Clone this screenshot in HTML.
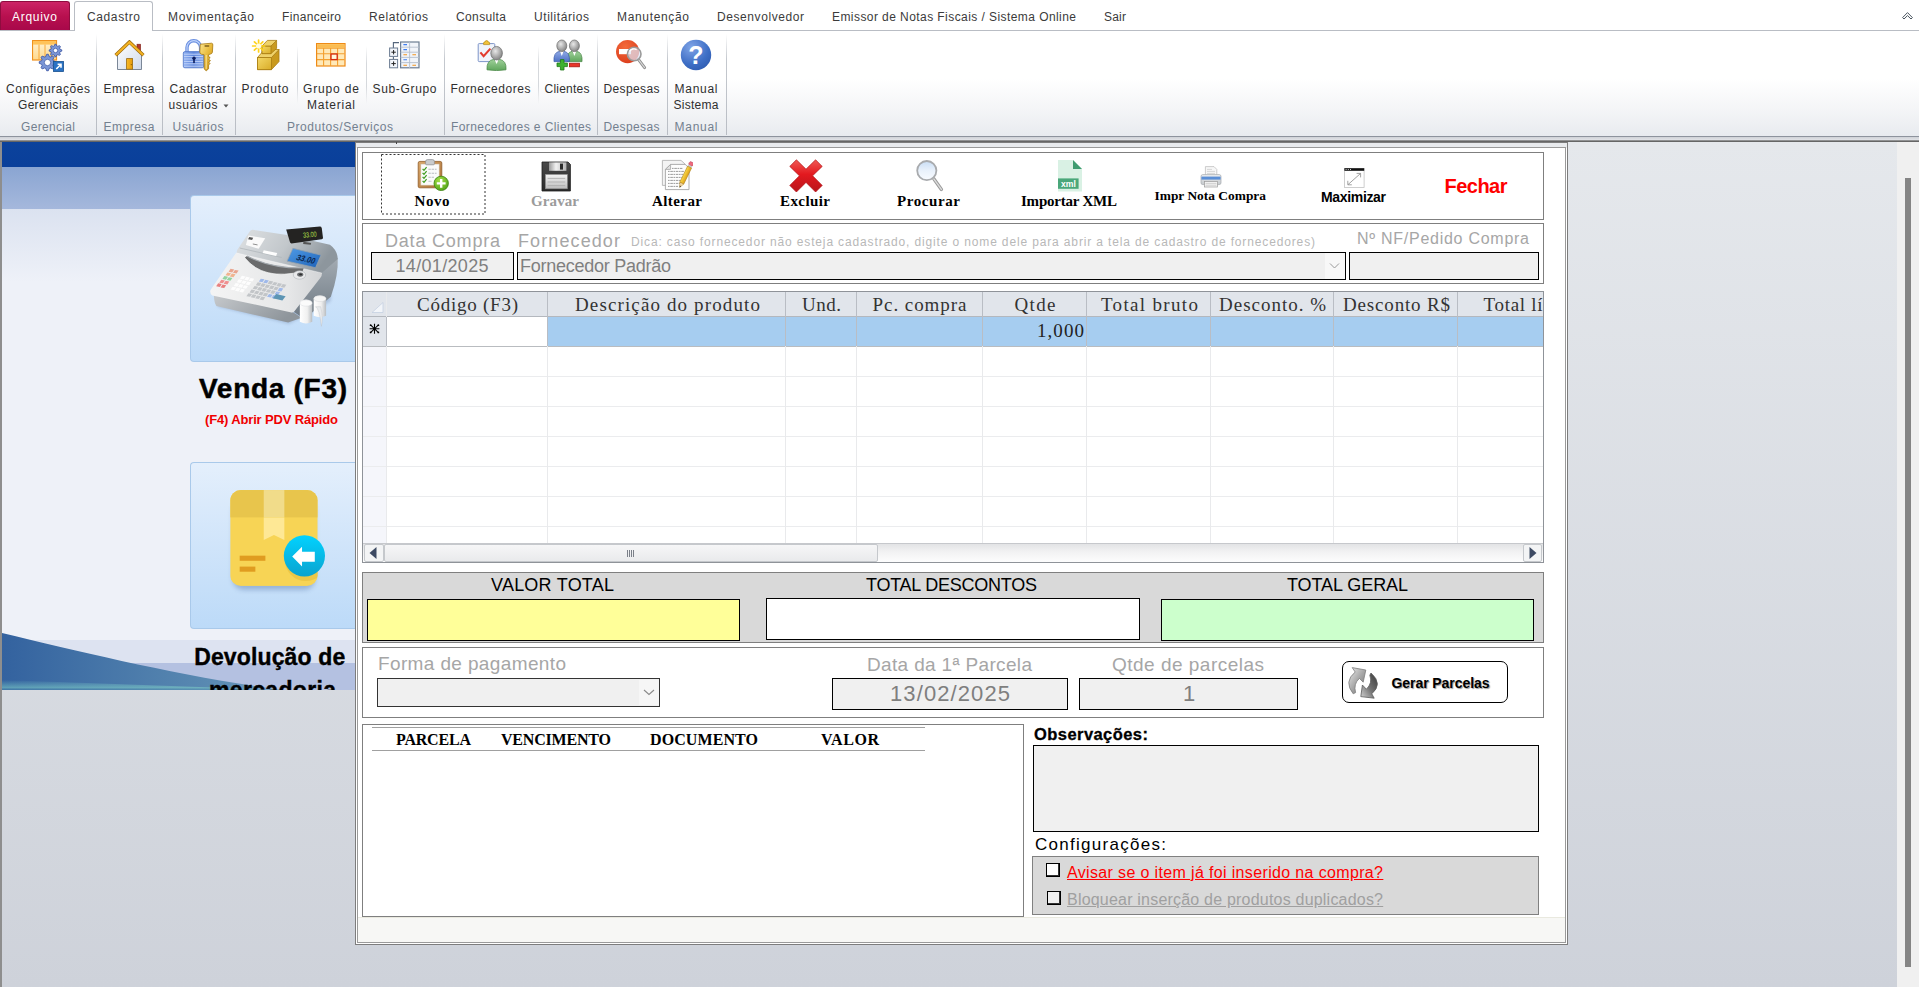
<!DOCTYPE html>
<html lang="pt-BR"><head><meta charset="utf-8"><title>Compras</title>
<style>
html,body{margin:0;padding:0;}
body{width:1919px;height:987px;overflow:hidden;position:relative;background:#dfe2e7;font-family:'Liberation Sans', sans-serif;}
div,span,svg{position:absolute;box-sizing:border-box;}
span{white-space:pre;}

.bx{border:1px solid #7f7f7f;background:#fff;}
.in{border:1px solid #000;background:#f0f0f0;}
.vs{width:1px;background:linear-gradient(#fff0,#c9cdd3 30%,#c9cdd3);}

</style></head><body>
<div style="left:0px;top:141px;width:1919px;height:846px;background:linear-gradient(#e5e8ec,#ced2da);"></div>
<div style="left:1897px;top:141px;width:22px;height:846px;background:#f0f0f0;"></div>
<div style="left:1905px;top:178px;width:6px;height:789px;background:#858585;"></div>
<div style="left:0px;top:141px;width:2px;height:846px;background:#8e8e8e;"></div>
<div style="left:0px;top:0px;width:1919px;height:31px;background:#fff;border-bottom:1px solid #b9bdc4;"></div>
<div style="left:0px;top:31px;width:1919px;height:105px;background:linear-gradient(#fff 0%,#fff 45%,#f4f5f7 75%,#e8ebef 100%);"></div>
<div style="left:0px;top:136px;width:1919px;height:1px;background:#8d939d;"></div>
<div style="left:0px;top:137px;width:1919px;height:3px;background:linear-gradient(#cfd2d7,#e1e3e7);"></div>
<div style="left:0px;top:140px;width:1919px;height:2px;background:linear-gradient(#a8a9ab,#666 70%);"></div>
<div style="left:0px;top:1px;width:70px;height:29px;background:linear-gradient(#cc2466,#b8104f 50%,#a8084a);border:1px solid #8f0c3f;border-bottom:none;border-radius:3px 3px 0 0;"></div>
<div style="left:74px;top:1px;width:79px;height:30px;background:#fff;border:1px solid #b9bdc4;border-bottom:none;border-radius:3px 3px 0 0;"></div>
<div style="left:1901px;top:10px;width:13px;height:11px;"><svg width="13" height="11" viewBox="0 0 13 11" style="left:0;top:0"><path d="M1.6 7.6 L6.5 2.6 L11.4 7.6 L10 9 L6.5 5.6 L3 9Z" fill="#fff" stroke="#4a5560" stroke-width="1" stroke-linejoin="round"/></svg></div>
<div style="left:96px;top:34px;width:1px;height:101px;background:linear-gradient(#fff0,#c4c8ce 25%,#b9bdc4);"></div>
<div style="left:162px;top:34px;width:1px;height:101px;background:linear-gradient(#fff0,#c4c8ce 25%,#b9bdc4);"></div>
<div style="left:235px;top:34px;width:1px;height:101px;background:linear-gradient(#fff0,#c4c8ce 25%,#b9bdc4);"></div>
<div style="left:444px;top:34px;width:1px;height:101px;background:linear-gradient(#fff0,#c4c8ce 25%,#b9bdc4);"></div>
<div style="left:597px;top:34px;width:1px;height:101px;background:linear-gradient(#fff0,#c4c8ce 25%,#b9bdc4);"></div>
<div style="left:667px;top:34px;width:1px;height:101px;background:linear-gradient(#fff0,#c4c8ce 25%,#b9bdc4);"></div>
<div style="left:726px;top:34px;width:1px;height:101px;background:linear-gradient(#fff0,#c4c8ce 25%,#b9bdc4);"></div>
<div style="left:297px;top:46px;width:1px;height:58px;background:linear-gradient(#fff0,#d5d8dc 30%,#d5d8dc 70%,#fff0);"></div>
<div style="left:366px;top:46px;width:1px;height:58px;background:linear-gradient(#fff0,#d5d8dc 30%,#d5d8dc 70%,#fff0);"></div>
<div style="left:538px;top:46px;width:1px;height:58px;background:linear-gradient(#fff0,#d5d8dc 30%,#d5d8dc 70%,#fff0);"></div>
<div style="left:2px;top:142px;width:353px;height:548px;background:linear-gradient(#0b429c 0px,#0a3f9a 25px,#8aa5d2 25px,#a5b8dc 67px,#dbe2f0 67px,#eef1f8 140px,#eef1f8 100%);overflow:hidden;">
<div style="left:0;top:498px;width:353px;height:50px;background:#dde3f1"></div>
<div style="left:0;top:521px;width:353px;height:27px;background:#b4c1e1"></div>
<svg width="353" height="58" viewBox="0 0 353 58" style="left:0;top:490px"><defs><linearGradient id="wv" x1="0" y1="0" x2="1" y2="0"><stop offset="0" stop-color="#33629f"/><stop offset="0.8" stop-color="#5d8db3"/><stop offset="1" stop-color="#86a6cb"/></linearGradient>
<linearGradient id="wv2" x1="0" y1="0" x2="0" y2="1"><stop offset="0" stop-color="#7fd0c8" stop-opacity="0"/><stop offset="0.75" stop-color="#7fd0c8" stop-opacity="0.55"/><stop offset="1" stop-color="#4f8fb0" stop-opacity="0.4"/></linearGradient></defs>
<path d="M0 1 C 80 20, 180 45, 282 58 L0 58 Z" fill="url(#wv)"/><path d="M0 48 L282 58 L0 58Z" fill="url(#wv2)"/></svg>
</div>
<div style="left:190px;top:195px;width:165px;height:167px;background:linear-gradient(#e4effc,#bcdaf8);border:1px solid #a9c9ea;border-right:none;border-radius:4px 0 0 4px;"></div>
<div style="left:190px;top:462px;width:165px;height:167px;background:linear-gradient(#e4effc,#bcdaf8);border:1px solid #a9c9ea;border-right:none;border-radius:4px 0 0 4px;"></div>
<div style="left:355px;top:142px;width:1213px;height:803px;background:#fff;border:1px solid #7d7d7d;"></div>
<div style="left:356px;top:143px;width:1211px;height:5px;background:#e9ebee;"></div>
<div style="left:357px;top:147px;width:1209px;height:796px;background:#fff;border:1px solid #9a9a9a;"></div>
<div style="left:358px;top:917px;width:1207px;height:25px;background:#f7f7f5;border-top:1px solid #e9e9df;"></div>
<div style="left:396px;top:142px;width:1px;height:2px;background:#444;"></div>
<div class="bx" style="left:362px;top:152px;width:1182px;height:68px;"></div>
<svg style="left:381px;top:154px" width="105" height="61"><rect x="0.5" y="0.5" width="103.5" height="59.5" fill="none" stroke="#333" stroke-width="1" stroke-dasharray="2 2"/></svg>
<div style="left:362px;top:223px;width:1182px;height:61px;border:1px solid #7f7f7f;"></div>
<div style="left:371px;top:252px;width:143px;height:28px;border:1px solid #000;background:#f0f0f0;"></div>
<div style="left:517px;top:252px;width:829px;height:28px;border:1px solid #000;background:#f0f0f0;"></div>
<div style="left:1349px;top:252px;width:190px;height:28px;border:1px solid #000;background:#f0f0f0;"></div>
<div style="left:1325px;top:253px;width:20px;height:26px;background:#f8f8f8;"><svg width="20" height="26" viewBox="0 0 20 26" style="left:0;top:0"><path d="M5 10.5 L9.5 15 L14 10.5" fill="none" stroke="#9a9a9a" stroke-width="1"/></svg></div>
<div style="left:362px;top:291px;width:1182px;height:272px;border:1px solid #8f9399;background:#fff;overflow:hidden;"></div>
<div style="left:363px;top:292px;width:1180px;height:25px;background:#e1e5eb;border-bottom:1px solid #b4b8be;"></div>
<div style="left:363px;top:317px;width:24px;height:226px;background:#f5f6fb;"></div>
<div style="left:363px;top:317px;width:24px;height:29px;background:#e1e5eb;"></div>
<div style="left:547px;top:317px;width:996px;height:29px;background:#a6cdf0;"></div>
<div style="left:363px;top:346px;width:1180px;height:1px;background:#b9bcc0;"></div>
<div style="left:363px;top:376px;width:1180px;height:1px;background:#ebecee;"></div>
<div style="left:363px;top:406px;width:1180px;height:1px;background:#ebecee;"></div>
<div style="left:363px;top:436px;width:1180px;height:1px;background:#ebecee;"></div>
<div style="left:363px;top:466px;width:1180px;height:1px;background:#ebecee;"></div>
<div style="left:363px;top:496px;width:1180px;height:1px;background:#ebecee;"></div>
<div style="left:363px;top:526px;width:1180px;height:1px;background:#ebecee;"></div>
<div style="left:386px;top:292px;width:1px;height:252px;background:#e9eaec;"></div>
<div style="left:547px;top:292px;width:1px;height:252px;background:#e9eaec;"></div>
<div style="left:785px;top:292px;width:1px;height:252px;background:#e9eaec;"></div>
<div style="left:856px;top:292px;width:1px;height:252px;background:#e9eaec;"></div>
<div style="left:982px;top:292px;width:1px;height:252px;background:#e9eaec;"></div>
<div style="left:1086px;top:292px;width:1px;height:252px;background:#e9eaec;"></div>
<div style="left:1210px;top:292px;width:1px;height:252px;background:#e9eaec;"></div>
<div style="left:1333px;top:292px;width:1px;height:252px;background:#e9eaec;"></div>
<div style="left:1457px;top:292px;width:1px;height:252px;background:#e9eaec;"></div>
<div style="left:547px;top:292px;width:1px;height:54px;background:#b9bdc4;"></div>
<div style="left:785px;top:292px;width:1px;height:54px;background:#b9bdc4;"></div>
<div style="left:856px;top:292px;width:1px;height:54px;background:#b9bdc4;"></div>
<div style="left:982px;top:292px;width:1px;height:54px;background:#b9bdc4;"></div>
<div style="left:1086px;top:292px;width:1px;height:54px;background:#b9bdc4;"></div>
<div style="left:1210px;top:292px;width:1px;height:54px;background:#b9bdc4;"></div>
<div style="left:1333px;top:292px;width:1px;height:54px;background:#b9bdc4;"></div>
<div style="left:1457px;top:292px;width:1px;height:54px;background:#b9bdc4;"></div>
<div style="left:386px;top:317px;width:1px;height:29px;background:#b9bdc4;"></div>
<div style="left:387px;top:317px;width:160px;height:29px;background:#fff;"></div>
<svg style="left:371px;top:301px" width="13" height="13" viewBox="0 0 13 13"><path d="M1 11.5 H12 V1.5Z" fill="#f2f5f9" stroke="#c2cde0" stroke-width="0.7"/></svg>
<svg style="left:368px;top:323px" width="13" height="12" viewBox="0 0 13 12"><path d="M6.5 0.8V10.8M1.6 5.8H11.4M2.8 2.2L10.2 9.4M10.2 2.2L2.8 9.4" stroke="#000" stroke-width="1.1"/><circle cx="2.6" cy="2.2" r="0.9"/><circle cx="10.4" cy="2.2" r="0.9"/><circle cx="2.6" cy="9.4" r="0.9"/><circle cx="10.4" cy="9.4" r="0.9"/></svg>
<div style="left:363px;top:543px;width:1180px;height:19px;background:linear-gradient(#e2e3e5,#f1f1f2 40%,#fdfdfd);border-top:1px solid #c6c8cc;"></div>
<div style="left:364px;top:544px;width:20px;height:18px;background:#f3f4f5;border:1px solid #c5c8cc;border-radius:2px;"><svg width="18" height="16" viewBox="0 0 18 16" style="left:0;top:0"><path d="M11.5 2 L11.5 14 L4.5 8Z" fill="#3d4a63"/></svg></div>
<div style="left:1523px;top:544px;width:19px;height:18px;background:#f3f4f5;border:1px solid #c5c8cc;border-radius:2px;"><svg width="17" height="16" viewBox="0 0 17 16" style="left:0;top:0"><path d="M5.5 2 L5.5 14 L12.5 8Z" fill="#3d4a63"/></svg></div>
<div style="left:384px;top:544px;width:494px;height:18px;background:linear-gradient(#f6f6f7,#e9eaec);border:1px solid #c5c8cc;border-radius:2px;"></div>
<div style="left:627px;top:550px;width:1px;height:7px;background:#7a7f88;"></div>
<div style="left:629px;top:550px;width:1px;height:7px;background:#7a7f88;"></div>
<div style="left:631px;top:550px;width:1px;height:7px;background:#7a7f88;"></div>
<div style="left:633px;top:550px;width:1px;height:7px;background:#7a7f88;"></div>
<div style="left:362px;top:572px;width:1182px;height:71px;background:#d9d9d9;border:1px solid #7f7f7f;"></div>
<div style="left:367px;top:599px;width:373px;height:42px;background:#ffff99;border:1px solid #000;"></div>
<div style="left:766px;top:598px;width:374px;height:42px;background:#fff;border:1px solid #000;"></div>
<div style="left:1161px;top:599px;width:373px;height:42px;background:#ccffcc;border:1px solid #000;"></div>
<div style="left:362px;top:647px;width:1182px;height:71px;border:1px solid #7f7f7f;"></div>
<div style="left:377px;top:678px;width:283px;height:29px;border:1px solid #333;background:#f0f0f0;"></div>
<div style="left:639px;top:680px;width:20px;height:25px;background:#f6f6f6;"><svg width="20" height="25" viewBox="0 0 20 25" style="left:0;top:0"><path d="M5 10 L10 14.5 L15 10" fill="none" stroke="#8a8a8a" stroke-width="1.1"/></svg></div>
<div style="left:832px;top:678px;width:236px;height:32px;border:1px solid #000;background:#f0f0f0;"></div>
<div style="left:1079px;top:678px;width:219px;height:32px;border:1px solid #000;background:#f0f0f0;"></div>
<div style="left:1342px;top:661px;width:166px;height:42px;border:1px solid #000;border-radius:7px;background:#fff;"></div>
<div style="left:362px;top:724px;width:662px;height:193px;border:1px solid #7f7f7f;"></div>
<div style="left:372px;top:727px;width:553px;height:1px;background:#a0a0a0;"></div>
<div style="left:372px;top:750px;width:553px;height:1px;background:#a0a0a0;"></div>
<div style="left:1033px;top:745px;width:506px;height:87px;border:1px solid #000;background:#f0f0f0;"></div>
<div style="left:1032px;top:856px;width:507px;height:59px;border:1px solid #808080;background:#d9d9d9;"></div>
<div style="left:1046px;top:863px;width:14px;height:14px;border:1px solid #000;background:#fff;box-shadow:inset -1px -1px 0 #333;"></div>
<div style="left:1047px;top:891px;width:14px;height:14px;border:1px solid #000;background:#f0f0f0;box-shadow:inset -1px -1px 0 #333;"></div>
<div style="left:223px;top:104px;width:6px;height:4px;"><svg width="6" height="4" viewBox="0 0 6 4" style="left:0;top:0"><path d="M0.5 0.5 L5.5 0.5 L3 3.5Z" fill="#555"/></svg></div>
<svg style="left:32px;top:40px" width="32" height="32" viewBox="0 0 32 32">
<defs><linearGradient id="og" x1="0" y1="0" x2="0" y2="1"><stop offset="0" stop-color="#fff3d6"/><stop offset="1" stop-color="#ffd98c"/></linearGradient></defs>
<rect x="0.5" y="0.5" width="24" height="19.5" fill="url(#og)" stroke="#f0921e" stroke-width="1.2"/>
<rect x="1" y="1" width="23" height="3.6" fill="#ffc35a"/>
<path d="M7 4.6V20M13 4.6V20M19 4.6V20" stroke="#f6a83a" stroke-width="1"/>
<polygon points="29.77,9.88 29.77,11.12 27.96,11.85 27.61,12.70 28.37,14.50 27.50,15.37 25.70,14.61 24.85,14.96 24.12,16.77 22.88,16.77 22.15,14.96 21.30,14.61 19.50,15.37 18.63,14.50 19.39,12.70 19.04,11.85 17.23,11.12 17.23,9.88 19.04,9.15 19.39,8.30 18.63,6.50 19.50,5.63 21.30,6.39 22.15,6.04 22.88,4.23 24.12,4.23 24.85,6.04 25.70,6.39 27.50,5.63 28.37,6.50 27.61,8.30 27.96,9.15" fill="#7b96d6" stroke="#3f5aa8" stroke-width="0.9" stroke-linejoin="round"/><circle cx="23.5" cy="10.5" r="2.2" fill="#fff" stroke="#3f5aa8" stroke-width="0.8"/><polygon points="23.76,21.69 23.76,23.31 21.38,24.28 20.92,25.40 21.92,27.77 20.77,28.92 18.40,27.92 17.28,28.38 16.31,30.76 14.69,30.76 13.72,28.38 12.60,27.92 10.23,28.92 9.08,27.77 10.08,25.40 9.62,24.28 7.24,23.31 7.24,21.69 9.62,20.72 10.08,19.60 9.08,17.23 10.23,16.08 12.60,17.08 13.72,16.62 14.69,14.24 16.31,14.24 17.28,16.62 18.40,17.08 20.77,16.08 21.92,17.23 20.92,19.60 21.38,20.72" fill="#7b96d6" stroke="#3f5aa8" stroke-width="0.9" stroke-linejoin="round"/><circle cx="15.5" cy="22.5" r="3.2" fill="#fff" stroke="#3f5aa8" stroke-width="0.8"/>
<rect x="21.5" y="21.5" width="10" height="10" fill="#2a72c4" stroke="#17508f" stroke-width="0.8"/>
<path d="M24.3 29 L28.6 24.7 M25.6 24.3 H29 V27.7" stroke="#fff" stroke-width="1.6" fill="none"/>
</svg>
<svg style="left:113px;top:40px" width="32" height="32" viewBox="0 0 32 32">
<defs><linearGradient id="hw" x1="0" y1="0" x2="1" y2="1"><stop offset="0" stop-color="#ffffff"/><stop offset="1" stop-color="#cfd9ea"/></linearGradient>
<linearGradient id="hd" x1="0" y1="0" x2="1" y2="0"><stop offset="0" stop-color="#f7b928"/><stop offset="1" stop-color="#e59a0a"/></linearGradient></defs>
<rect x="24" y="4.2" width="3.6" height="9" fill="#b3372c" stroke="#7d211a" stroke-width="0.6"/>
<path d="M4.5 14 L16.4 3.2 L28.5 14 V29.5 H4.5Z" fill="url(#hw)" stroke="#7b8797" stroke-width="1"/>
<path d="M2.6 15.2 L16.4 2 L30.4 15.2" fill="none" stroke="#9a6a10" stroke-width="3.4" stroke-linejoin="miter"/>
<path d="M2.8 15 L16.4 2.2 L30.2 15" fill="none" stroke="#f3b221" stroke-width="2" stroke-linejoin="miter"/>
<rect x="13.6" y="18.6" width="6" height="10.6" fill="url(#hd)" stroke="#9a6a10" stroke-width="0.8"/>
<circle cx="18.3" cy="24.6" r="0.6" fill="#7a5208"/>
</svg>
<svg style="left:182px;top:39px" width="32" height="33" viewBox="0 0 32 33">
<defs><linearGradient id="lk" x1="0" y1="0" x2="1" y2="0"><stop offset="0" stop-color="#8fb0f0"/><stop offset="0.5" stop-color="#5f86dc"/><stop offset="1" stop-color="#86a6ea"/></linearGradient>
<linearGradient id="ky" x1="0" y1="0" x2="1" y2="1"><stop offset="0" stop-color="#fbe58e"/><stop offset="0.5" stop-color="#e8b93a"/><stop offset="1" stop-color="#c58d14"/></linearGradient></defs>
<path d="M5 13 V8.5 A6.8 6.8 0 0 1 18.6 8.5 V13" fill="none" stroke="#6a8fe0" stroke-width="3.4"/>
<path d="M5 13 V8.5 A6.8 6.8 0 0 1 18.6 8.5 V13" fill="none" stroke="#c0d4fb" stroke-width="1.2"/>
<rect x="1.3" y="12.6" width="20.5" height="16.2" rx="1.6" fill="url(#lk)" stroke="#5276c8" stroke-width="0.8"/>
<path d="M2 15.2H21M2 17.6H21M2 20H21M2 22.4H21M2 24.8H21M2 27.2H21" stroke="#c7d8fb" stroke-width="0.9"/>
<circle cx="12" cy="19.3" r="1.7" fill="#0c1d5e"/><rect x="11.2" y="19.3" width="1.6" height="4.8" fill="#0c1d5e"/>
<path d="M18.3 5.2 L29.6 4.2 Q31 4.4 30.8 6 L30.4 13.2 Q30 14.8 28.6 15 L26.6 15.6 V17.6 L28.2 18.6 L26.6 20 L28.4 21.8 L26.6 23 L28 24.6 L26.6 26 V29.8 L24.2 31.8 L22.2 30 V15.8 L19.4 15.2 Q17.8 14.6 17.8 13Z" fill="url(#ky)" stroke="#a87810" stroke-width="0.8" stroke-linejoin="round"/>
<rect x="22.6" y="6" width="4.6" height="2" rx="0.6" fill="#9b7a2a"/>
<path d="M24.2 16 V30" stroke="#fff2b8" stroke-width="0.8"/>
</svg>
<svg style="left:251px;top:39px" width="30" height="32" viewBox="0 0 30 32">
<defs><linearGradient id="bx1" x1="0" y1="0" x2="1" y2="1"><stop offset="0" stop-color="#f4d867"/><stop offset="1" stop-color="#d9ac28"/></linearGradient></defs>
<path d="M6.5 18.5 H20.5 L28 10.5 V22.6 L20.5 30.6 H6.5Z" fill="#c99a1e" stroke="#a87c10" stroke-width="0.8" stroke-linejoin="round"/>
<path d="M6.5 18.5 H20.5 V30.6 H6.5Z" fill="url(#bx1)" stroke="#a87c10" stroke-width="0.8"/>
<path d="M6.5 18.5 L13.6 10.5 H28 L20.5 18.5Z" fill="#efd26a" stroke="#a87c10" stroke-width="0.8" stroke-linejoin="round"/>
<path d="M11 7 H20 L25.6 1.4 V9.4 L20 14.6 H11Z" fill="#c99a1e" stroke="#a87c10" stroke-width="0.8" stroke-linejoin="round"/>
<path d="M11 7 H20 V14.6 H11Z" fill="url(#bx1)" stroke="#a87c10" stroke-width="0.8"/>
<path d="M11 7 L16.4 1.4 H25.6 L20 7Z" fill="#efd26a" stroke="#a87c10" stroke-width="0.8" stroke-linejoin="round"/>
<g stroke="#ffd21a" stroke-width="1.7" stroke-linecap="round"><path d="M7.6 1 V13 M1.6 7 H13.6 M3.4 2.8 L11.8 11.2 M11.8 2.8 L3.4 11.2"/></g>
<circle cx="7.6" cy="7" r="2.6" fill="#fffbe0"/>
</svg>
<svg style="left:316px;top:43px" width="30" height="24" viewBox="0 0 30 24">
<rect x="0.6" y="0.6" width="28.4" height="22.4" fill="#ffe9b8" stroke="#ee8b16" stroke-width="1.2"/>
<rect x="1.2" y="1.2" width="27.2" height="3.6" fill="#fbbd52"/>
<path d="M1 5.2H28.6M1 10.8H28.6M1 16.6H28.6M7.6 5V23M14.6 5V23M21.6 5V23" stroke="#f3a030" stroke-width="1.1"/>
<rect x="15" y="11" width="6.2" height="5.6" fill="#fff6dc" stroke="#d5280c" stroke-width="1.3"/>
</svg>
<svg style="left:389px;top:41px" width="31" height="28" viewBox="0 0 31 28">
<path d="M4.4 7 V1.6 H10" fill="none" stroke="#55667c" stroke-width="1.1"/>
<path d="M4.4 15.5 V18.5" stroke="#55667c" stroke-width="1.1"/>
<rect x="0.6" y="7" width="8" height="8.4" fill="#f3f6fb" stroke="#6c7c92" stroke-width="1"/>
<rect x="0.6" y="18.4" width="8" height="8.4" fill="#f3f6fb" stroke="#6c7c92" stroke-width="1"/>
<path d="M2.4 11.2H6.8M4.6 9V13.4M2.4 22.6H6.8M4.6 20.4V24.8" stroke="#222" stroke-width="1"/>
<rect x="11.6" y="1" width="18.4" height="25.8" fill="#f1f4fa" stroke="#6c7c92" stroke-width="1.2"/>
<path d="M11.6 6.2H30M11.6 11.2H30M11.6 16.4H30M11.6 21.6H30M20.6 1V27" stroke="#b4bfce" stroke-width="0.9"/>
<path d="M14.4 3.6H18M14.4 8.6H18M14.4 18.8H18" stroke="#3f7df0" stroke-width="1.1"/>
<path d="M14.4 13.8H18M23.4 13.8H27M14.4 24.2H18M23.4 24.2H27" stroke="#f2921e" stroke-width="1.1"/>
</svg>
<svg style="left:477px;top:40px" width="30" height="31" viewBox="0 0 30 31">
<defs><radialGradient id="hd1" cx="0.4" cy="0.35" r="0.7"><stop offset="0" stop-color="#e8e8e8"/><stop offset="1" stop-color="#7e7e7e"/></radialGradient>
<linearGradient id="gb" x1="0" y1="0" x2="0" y2="1"><stop offset="0" stop-color="#9fd09a"/><stop offset="1" stop-color="#5fa65c"/></linearGradient></defs>
<rect x="1.2" y="3.6" width="16.6" height="18" rx="1" fill="#f0f4fb" stroke="#7d94c8" stroke-width="1"/>
<path d="M6.6 4.6 V3 Q6.6 2 7.8 2 H8 Q8.2 0.6 9.6 0.6 Q11 0.6 11.2 2 H11.4 Q12.6 2 12.6 3 V4.6Z" fill="#f2c23a" stroke="#b58a14" stroke-width="0.7"/>
<path d="M3.4 12.4 L6.6 16.2 L13.4 8.6" fill="none" stroke="#e23b2e" stroke-width="2.1"/>
<path d="M10 29.8 Q9.4 20.4 16.6 19.4 L19.6 22 L22.6 19.4 Q29.6 20.4 29 29.8 Q19.6 31.4 10 29.8Z" fill="url(#gb)" stroke="#4c8a4a" stroke-width="0.8"/>
<path d="M17.4 19.4 L19.6 24 L21.8 19.4Z" fill="#fff"/>
<ellipse cx="19.6" cy="13.2" rx="5.8" ry="6.8" fill="url(#hd1)" stroke="#6a6a6a" stroke-width="0.7"/>
</svg>
<svg style="left:553px;top:39px" width="30" height="32" viewBox="0 0 30 32">
<defs><linearGradient id="bb" x1="0" y1="0" x2="0" y2="1"><stop offset="0" stop-color="#8fa9e6"/><stop offset="1" stop-color="#4f72c6"/></linearGradient></defs>
<path d="M14 22.6 Q13.4 13.2 19 12.4 L21.4 15 L23.8 12.4 Q29.6 13.2 29 22.6Z" fill="url(#gb)" stroke="#4c8a4a" stroke-width="0.8"/>
<path d="M19.6 12.4 L21.4 17 L23.2 12.4Z" fill="#fff"/>
<ellipse cx="21.4" cy="6.8" rx="5" ry="5.8" fill="url(#hd1)" stroke="#6a6a6a" stroke-width="0.7"/>
<path d="M1 22.6 Q0.4 13.2 6.4 12.4 L8.8 15 L11.2 12.4 Q17 13.2 16.4 22.6Z" fill="url(#bb)" stroke="#3f5fae" stroke-width="0.8"/>
<path d="M7 12.4 L8.8 17 L10.6 12.4Z" fill="#fff"/>
<ellipse cx="8.8" cy="6.8" rx="5" ry="5.8" fill="url(#hd1)" stroke="#6a6a6a" stroke-width="0.7"/>
<path d="M7.4 20.6 H11 V24 H14.4 V27.6 H11 V31 H7.4 V27.6 H4 V24 H7.4Z" fill="#3eb12f" stroke="#1f7a16" stroke-width="0.8"/>
<rect x="16.4" y="24.2" width="10" height="3.6" fill="#e8362a" stroke="#a81a12" stroke-width="0.8"/>
</svg>
<svg style="left:615px;top:39px" width="32" height="32" viewBox="0 0 32 32">
<defs><radialGradient id="rc" cx="0.4" cy="0.3" r="0.8"><stop offset="0" stop-color="#f46a3a"/><stop offset="1" stop-color="#d93a1a"/></radialGradient></defs>
<circle cx="12.6" cy="12.6" r="11.6" fill="url(#rc)"/>
<rect x="4" y="10" width="12" height="5.2" fill="#fff"/>
<path d="M23.4 20.4 L29.6 28.6" stroke="#8a8a8a" stroke-width="3" stroke-linecap="round"/>
<path d="M23.4 20.4 L29.6 28.6" stroke="#d8d8d8" stroke-width="1.2" stroke-linecap="round"/>
<circle cx="19.2" cy="15" r="6.8" fill="#dfe6f6" fill-opacity="0.72" stroke="#9a9a9a" stroke-width="1.6"/>
<path d="M14.6 12.4 A5 5 0 0 1 21.6 10.6" stroke="#fff" stroke-width="1.4" fill="none"/>
</svg>
<svg style="left:680px;top:39px" width="32" height="32" viewBox="0 0 32 32">
<defs><radialGradient id="qb" cx="0.35" cy="0.25" r="0.9"><stop offset="0" stop-color="#7fa4e6"/><stop offset="0.6" stop-color="#3f6fc6"/><stop offset="1" stop-color="#2b57ac"/></radialGradient></defs>
<circle cx="16" cy="16" r="15.2" fill="url(#qb)"/>
<text x="16" y="24.6" text-anchor="middle" font-family="'Liberation Sans',sans-serif" font-weight="bold" font-size="25" fill="#fff">?</text>
</svg>
<svg style="left:417px;top:159px" width="32" height="32" viewBox="0 0 32 32">
<defs><linearGradient id="cb" x1="0" y1="0" x2="1" y2="1"><stop offset="0" stop-color="#d9a76a"/><stop offset="1" stop-color="#a96e34"/></linearGradient>
<radialGradient id="gp" cx="0.4" cy="0.3" r="0.8"><stop offset="0" stop-color="#a6e04a"/><stop offset="1" stop-color="#4a9e12"/></radialGradient></defs>
<rect x="1.2" y="2.4" width="23.6" height="26.4" rx="1.6" fill="url(#cb)" stroke="#8e5a26" stroke-width="0.8"/>
<rect x="3.8" y="5" width="18.4" height="21.2" fill="#fbfbfb" stroke="#c9b394" stroke-width="0.6"/>
<path d="M8.6 4.8 V2.4 Q8.6 0.6 10.6 0.6 H15.4 Q17.4 0.6 17.4 2.4 V4.8 Q17.4 5.8 16.4 5.8 H9.6 Q8.6 5.8 8.6 4.8Z" fill="#c9cbcd" stroke="#8a8d90" stroke-width="0.7"/>
<g fill="none" stroke="#3c9a1c" stroke-width="1.2"><path d="M5.6 9.8 L7 11.4 L9.6 8.2"/><path d="M5.6 13.8 L7 15.4 L9.6 12.2"/><path d="M5.6 17.8 L7 19.4 L9.6 16.2"/><path d="M5.6 21.8 L7 23.4 L9.6 20.2"/></g>
<path d="M11.4 10.2H19.6M11.4 14.2H19.6M11.4 18.2H17M11.4 22.2H15" stroke="#b9bcc0" stroke-width="1.1" stroke-dasharray="2.4 0.8"/>
<circle cx="24.2" cy="24.4" r="7.2" fill="url(#gp)" stroke="#3b8410" stroke-width="0.8"/>
<path d="M24.2 20 V28.8 M19.8 24.4 H28.6" stroke="#fff" stroke-width="2.4"/>
</svg>
<svg style="left:541px;top:161px" width="30" height="31" viewBox="0 0 30 31">
<defs><linearGradient id="fl" x1="0" y1="0" x2="0" y2="1"><stop offset="0" stop-color="#4a4a4a"/><stop offset="1" stop-color="#2a2a2a"/></linearGradient>
<linearGradient id="fm" x1="0" y1="0" x2="1" y2="0"><stop offset="0" stop-color="#9a9a9a"/><stop offset="0.4" stop-color="#f2f2f2"/><stop offset="1" stop-color="#b4b4b4"/></linearGradient>
<linearGradient id="fb" x1="0" y1="0" x2="0" y2="1"><stop offset="0" stop-color="#f4f4f4"/><stop offset="1" stop-color="#bdbdbd"/></linearGradient></defs>
<path d="M1 1 H27 L29.4 3.4 V30 H1Z" fill="url(#fl)" stroke="#1e1e1e" stroke-width="0.8"/>
<rect x="8" y="1.4" width="17.4" height="8.4" fill="url(#fm)"/>
<rect x="19" y="2.6" width="3" height="6" fill="#2c2c2c"/>
<rect x="4.4" y="13.4" width="22" height="14.4" fill="url(#fb)" stroke="#8a8a8a" stroke-width="0.6"/>
<path d="M6.6 17.4H24.2M6.6 21H24.2M6.6 24.6H24.2" stroke="#a9a9a9" stroke-width="0.8"/>
</svg>
<svg style="left:661px;top:159px" width="32" height="32" viewBox="0 0 32 32">
<defs><linearGradient id="pn" x1="0" y1="0" x2="1" y2="0"><stop offset="0" stop-color="#f9d94a"/><stop offset="1" stop-color="#e0a31a"/></linearGradient></defs>
<path d="M1.4 1.4 H20 L24 5 V26.4 H1.4Z" fill="#f4f4f4" stroke="#b4b4b4" stroke-width="0.9"/>
<path d="M9.6 5.4 H24.2 L28 9 V30.6 H4.4 V10.4Z" fill="#fdfdfd" stroke="#a4a4a4" stroke-width="0.9"/>
<path d="M4.4 10.4 H9.6 V5.4Z" fill="#e4e4e4" stroke="#a4a4a4" stroke-width="0.8"/>
<path d="M11 9.4H22M7 12.4H23M7 15.4H22M7 18.4H23M7 21.4H21M7 24.4H20M7 27.4H17" stroke="#8e8e8e" stroke-width="0.9" stroke-dasharray="1.6 0.7 2.6 0.6"/>
<g transform="translate(29.8,5.6) rotate(26)"><rect x="-2.2" y="-2.6" width="4.4" height="3.6" rx="1.2" fill="#ee6a7e" stroke="#b43c50" stroke-width="0.5"/><rect x="-2.2" y="1" width="4.4" height="1.8" fill="#c9c9c9"/><rect x="-2.2" y="2.8" width="4.4" height="17.8" fill="url(#pn)" stroke="#a8780c" stroke-width="0.5"/><path d="M-2.2 20.6 L0 25.4 L2.2 20.6Z" fill="#f3d7a6" stroke="#a8780c" stroke-width="0.4"/><path d="M-0.8 23.6 L0 25.4 L0.8 23.6Z" fill="#333"/></g>
</svg>
<svg style="left:789px;top:159px" width="34" height="34" viewBox="0 0 34 34">
<defs><linearGradient id="rx" x1="0" y1="0" x2="0" y2="1"><stop offset="0" stop-color="#f05a55"/><stop offset="0.45" stop-color="#e3191f"/><stop offset="1" stop-color="#b8141a"/></linearGradient></defs>
<path d="M7.4 0.8 L17 10.2 L26.6 0.8 L33.2 7.4 L23.6 16.8 L33.2 26.4 L26.6 33 L17 23.4 L7.4 33 L0.8 26.4 L10.4 16.8 L0.8 7.4Z" fill="url(#rx)" stroke="#b01218" stroke-width="0.7" stroke-linejoin="round"/>
</svg>
<svg style="left:914px;top:159px" width="30" height="34" viewBox="0 0 30 34">
<defs><linearGradient id="ln" x1="0" y1="0" x2="0" y2="1"><stop offset="0" stop-color="#c9def6"/><stop offset="0.5" stop-color="#e9f1fb"/><stop offset="1" stop-color="#f8fbff"/></linearGradient></defs>
<path d="M19.8 19.8 L27.4 30.4" stroke="#9a9a9a" stroke-width="3.4" stroke-linecap="round"/>
<path d="M19.8 19.8 L27.4 30.4" stroke="#dcdcdc" stroke-width="1.4" stroke-linecap="round"/>
<circle cx="12.8" cy="11.6" r="9.6" fill="url(#ln)" stroke="#a9abae" stroke-width="1.8"/>
</svg>
<svg style="left:1057px;top:159px" width="26" height="33" viewBox="0 0 26 33">
<path d="M1 1 H16 L25 10 V32.4 H1Z" fill="#d9f1e4"/>
<path d="M16 1 L25 10 H16Z" fill="#3f9c70"/>
<rect x="1" y="19.4" width="20.6" height="10.4" fill="#4aa77a"/>
<text x="11.4" y="27.6" text-anchor="middle" font-family="'Liberation Sans',sans-serif" font-weight="bold" font-size="8.6" fill="#fff">xml</text>
</svg>
<svg style="left:1200px;top:166px" width="22" height="22" viewBox="0 0 22 22">
<defs><linearGradient id="pr" x1="0" y1="0" x2="0" y2="1"><stop offset="0" stop-color="#eef0f2"/><stop offset="1" stop-color="#c4c8cc"/></linearGradient></defs>
<path d="M5.4 0.6 H14 L16.8 3.4 V10 H5.4Z" fill="#f7f7f7" stroke="#b9b9b9" stroke-width="0.7"/>
<path d="M7 3.4H12M7 5.4H15M7 7.4H15" stroke="#c9c9c9" stroke-width="0.7"/>
<rect x="1" y="8.6" width="20" height="10" rx="1.8" fill="url(#pr)" stroke="#a4a8ac" stroke-width="0.7"/>
<rect x="1.4" y="10.6" width="19.2" height="3" fill="#5b8fd6"/>
<rect x="4.4" y="15.4" width="13.2" height="5.6" fill="#f4f4f4" stroke="#9a9a9a" stroke-width="0.7"/>
<path d="M5.6 17.4H16.4M5.6 19.2H16.4" stroke="#b9b9b9" stroke-width="0.6"/>
</svg>
<svg style="left:1344px;top:168px" width="21" height="20" viewBox="0 0 21 20">
<rect x="0.5" y="0.5" width="19.6" height="19" fill="#fff" stroke="#c2c2c2" stroke-width="0.8"/>
<rect x="0.4" y="0.2" width="19.8" height="2.6" fill="#111"/>
<path d="M1.6 1.5H2.6M3.8 1.5H4.8M6 1.5H7" stroke="#ddd" stroke-width="0.9"/>
<path d="M4 16.6 L16.4 5.6 M12.6 5.4 H16.6 V9.4 M3.8 12.8 V16.8 H7.8" stroke="#8a8a8a" stroke-width="0.8" fill="none"/>
</svg>
<svg style="left:1347px;top:667px" width="33" height="32" viewBox="0 0 33 32">
<defs><linearGradient id="ga" x1="0" y1="0" x2="1" y2="1"><stop offset="0" stop-color="#ececec"/><stop offset="0.5" stop-color="#a8a8a8"/><stop offset="1" stop-color="#6e6e6e"/></linearGradient>
<linearGradient id="gd" x1="1" y1="0" x2="0" y2="1"><stop offset="0" stop-color="#383838"/><stop offset="0.55" stop-color="#767676"/><stop offset="1" stop-color="#d4d4d4"/></linearGradient></defs>
<path d="M5.2 0.6 L18.8 3 L16.2 15.2 L12.4 11.4 Q6.2 16.8 8.6 25.6 L6.2 26.8 Q-3.6 14.6 8.2 5Z" fill="url(#ga)" stroke="#7d7d7d" stroke-width="0.8" stroke-linejoin="round"/>
<path d="M24 6 Q36.4 17 24.8 26.8 L27.2 31.2 L13.8 29.6 L15.4 18 L19.4 22.2 Q25.8 16 22.8 8.2Z" fill="url(#gd)" stroke="#5c5c5c" stroke-width="0.8" stroke-linejoin="round"/>
</svg>
<svg style="left:185px;top:455px" width="175" height="180" viewBox="0 0 960 987">
<defs><linearGradient id="cy" x1="0" y1="0" x2="0" y2="1"><stop offset="0" stop-color="#02d2ff"/><stop offset="1" stop-color="#0aa3cf"/></linearGradient>
<filter id="sh" x="-20%" y="-20%" width="140%" height="150%"><feGaussianBlur stdDeviation="14"/></filter>
<clipPath id="pk"><rect x="248" y="192" width="480" height="526" rx="58"/></clipPath></defs>
<rect x="262" y="250" width="452" height="490" rx="58" fill="#5f7fae" opacity="0.45" filter="url(#sh)"/>
<g clip-path="url(#pk)">
<rect x="248" y="192" width="480" height="526" fill="#f7d455"/>
<rect x="248" y="192" width="480" height="150" fill="#e8c54c"/>
<rect x="432" y="192" width="113" height="150" fill="#f1dc8a"/>
<path d="M432 342 H545 V466 L488 438 L432 466Z" fill="#fee895"/>
<rect x="300" y="552" width="141" height="28" fill="#e09c20"/>
<rect x="300" y="612" width="86" height="28" fill="#e09c20"/>
<circle cx="662" cy="578" r="113" fill="#e3bb3a" opacity="0.55"/>
</g>
<circle cx="655" cy="553" r="113" fill="url(#cy)"/>
<path d="M588 556 L642 503 V530 H712 V585 H642 V611Z" fill="#fff"/>
</svg>
<svg style="left:185px;top:190px" width="175" height="180" viewBox="0 0 960 987">
<defs>
<linearGradient id="r1" x1="0" y1="0" x2="1" y2="0.3"><stop offset="0" stop-color="#dfe2e4"/><stop offset="0.55" stop-color="#c2c7cb"/><stop offset="1" stop-color="#8d969d"/></linearGradient>
<linearGradient id="r2" x1="0" y1="0" x2="1" y2="0"><stop offset="0" stop-color="#f4f4f4"/><stop offset="0.7" stop-color="#e6e7e8"/><stop offset="1" stop-color="#d2d4d6"/></linearGradient>
<linearGradient id="r3" x1="0" y1="0" x2="1" y2="0.4"><stop offset="0" stop-color="#c6c9cc"/><stop offset="1" stop-color="#8e959b"/></linearGradient>
<linearGradient id="r4" x1="0" y1="0" x2="0" y2="1"><stop offset="0" stop-color="#a3abb2"/><stop offset="1" stop-color="#6f7a84"/></linearGradient>
<linearGradient id="r5" x1="0" y1="0" x2="1" y2="1"><stop offset="0" stop-color="#4f9be6"/><stop offset="1" stop-color="#1f63b8"/></linearGradient>
<linearGradient id="r6" x1="0" y1="0" x2="1" y2="0"><stop offset="0" stop-color="#ffffff"/><stop offset="0.6" stop-color="#f0f0f0"/><stop offset="1" stop-color="#b9bdc1"/></linearGradient>
<filter id="rs" x="-20%" y="-20%" width="140%" height="160%"><feGaussianBlur stdDeviation="10"/></filter>
</defs>
<path d="M180 640 L570 735 L800 610 L800 560 L180 600Z" fill="#7a90b4" opacity="0.4" filter="url(#rs)"/>
<!-- right dark face -->
<path d="M745 452 L838 372 Q842 470 800 585 L655 708 L596 668Z" fill="url(#r4)"/>
<!-- front lower panel -->
<path d="M158 575 L588 668 L640 700 L566 727 L172 636 Q160 620 158 575Z" fill="url(#r3)"/>
<!-- keyboard deck -->
<path d="M282 342 L752 452 Q752 470 742 482 L598 668 Q590 674 578 670 L150 578 Q134 566 140 548Z" fill="url(#r2)"/>
<!-- upper body -->
<path d="M372 218 L560 246 L795 300 Q836 330 838 378 L750 455 L285 346 Q282 336 288 326 L356 226 Q362 216 372 218Z" fill="url(#r1)"/>
<path d="M285 346 L750 455" stroke="#fff" stroke-width="3" opacity="0.7"/>
<!-- dark curved recess -->
<path d="M340 362 Q470 430 650 428 L646 446 Q430 500 328 372Z" fill="#6a6b6c"/>
<path d="M340 362 Q470 430 650 428" stroke="#a4aaaf" stroke-width="6" fill="none"/>
<path d="M328 372 Q430 500 646 446" stroke="#f4f5f6" stroke-width="4" fill="none"/>
<!-- receipt paper -->
<path d="M348 250 L440 264 L404 322 L334 302Z" fill="#fafafa"/>
<path d="M352 258 l22 4 l-6 12 l-22 -4Z" fill="#555"/>
<path d="M372 296 l26 5" stroke="#666" stroke-width="4"/>
<path d="M300 318 L530 370" stroke="#aeb4b9" stroke-width="4"/>
<path d="M432 330 L506 346 L500 362 L426 346Z" fill="#fdfdfd"/>
<!-- LCD -->
<path d="M592 320 L746 357 L716 426 L560 390Z" fill="url(#r5)" stroke="#9aa2a9" stroke-width="4"/>
<text transform="translate(606,382) rotate(13) skewX(-14)" font-family="'Liberation Sans',sans-serif" font-weight="bold" font-size="46" fill="#0c2a55" textLength="104" lengthAdjust="spacingAndGlyphs">33.00</text>
<!-- customer display -->
<path d="M650 284 L692 290 L690 300 L648 296Z" fill="#555"/>
<path d="M555 216 L740 200 Q748 200 750 208 L757 262 Q757 268 750 270 L584 293 Q578 293 576 287Z" fill="#242322"/>
<text transform="translate(648,262) rotate(-6)" font-family="'Liberation Sans',sans-serif" font-size="40" fill="#b4e04a" textLength="76" lengthAdjust="spacingAndGlyphs">33.00</text>
<!-- key lock -->
<ellipse cx="628" cy="466" rx="34" ry="23" fill="#e9eaeb" stroke="#a9aeb3" stroke-width="3"/>
<ellipse cx="632" cy="464" rx="17" ry="11" fill="#6a6d70"/>
<ellipse cx="634" cy="463" rx="8" ry="5" fill="#2c2c2c"/>
<path d="M250 432 l20 4 l-11 16 l-20 -4Z" fill="#e9a58f"/><path d="M274 438 l20 4 l-11 16 l-20 -4Z" fill="#e9a58f"/><path d="M233 452 l20 4 l-11 16 l-20 -4Z" fill="#f0b48f"/><path d="M257 458 l20 4 l-11 16 l-20 -4Z" fill="#f0b48f"/><path d="M216 472 l20 4 l-11 16 l-20 -4Z" fill="#93d3a1"/><path d="M240 478 l20 4 l-11 16 l-20 -4Z" fill="#93d3a1"/><path d="M199 492 l20 4 l-11 16 l-20 -4Z" fill="#ef8f8f"/><path d="M223 498 l20 4 l-11 16 l-20 -4Z" fill="#ef8f8f"/><path d="M182 512 l20 4 l-11 16 l-20 -4Z" fill="#e87f7f"/><path d="M206 518 l20 4 l-11 16 l-20 -4Z" fill="#e87f7f"/><path d="M312 470 l20 4 l-11 16 l-20 -4Z" fill="#fdfdfd"/><path d="M336 476 l20 4 l-11 16 l-20 -4Z" fill="#fdfdfd"/><path d="M360 482 l20 4 l-11 16 l-20 -4Z" fill="#fdfdfd"/><path d="M295 490 l20 4 l-11 16 l-20 -4Z" fill="#fdfdfd"/><path d="M319 496 l20 4 l-11 16 l-20 -4Z" fill="#fdfdfd"/><path d="M343 502 l20 4 l-11 16 l-20 -4Z" fill="#fdfdfd"/><path d="M278 510 l20 4 l-11 16 l-20 -4Z" fill="#fdfdfd"/><path d="M302 516 l20 4 l-11 16 l-20 -4Z" fill="#fdfdfd"/><path d="M326 522 l20 4 l-11 16 l-20 -4Z" fill="#fdfdfd"/><path d="M261 530 l20 4 l-11 16 l-20 -4Z" fill="#fdfdfd"/><path d="M285 536 l20 4 l-11 16 l-20 -4Z" fill="#fdfdfd"/><path d="M309 542 l20 4 l-11 16 l-20 -4Z" fill="#fdfdfd"/><path d="M416 486 l20 4 l-11 16 l-20 -4Z" fill="#9fb9ea"/><path d="M440 492 l20 4 l-11 16 l-20 -4Z" fill="#9fb9ea"/><path d="M464 498 l20 4 l-11 16 l-20 -4Z" fill="#c2c5c8"/><path d="M488 504 l20 4 l-11 16 l-20 -4Z" fill="#c2c5c8"/><path d="M512 510 l20 4 l-11 16 l-20 -4Z" fill="#c2c5c8"/><path d="M536 516 l20 4 l-11 16 l-20 -4Z" fill="#c2c5c8"/><path d="M399 506 l20 4 l-11 16 l-20 -4Z" fill="#c2c5c8"/><path d="M423 512 l20 4 l-11 16 l-20 -4Z" fill="#c2c5c8"/><path d="M447 518 l20 4 l-11 16 l-20 -4Z" fill="#c2c5c8"/><path d="M471 524 l20 4 l-11 16 l-20 -4Z" fill="#c2c5c8"/><path d="M495 530 l20 4 l-11 16 l-20 -4Z" fill="#c2c5c8"/><path d="M519 536 l20 4 l-11 16 l-20 -4Z" fill="#9fb9ea"/><path d="M382 526 l20 4 l-11 16 l-20 -4Z" fill="#c2c5c8"/><path d="M406 532 l20 4 l-11 16 l-20 -4Z" fill="#c2c5c8"/><path d="M430 538 l20 4 l-11 16 l-20 -4Z" fill="#c2c5c8"/><path d="M454 544 l20 4 l-11 16 l-20 -4Z" fill="#c2c5c8"/><path d="M478 550 l20 4 l-11 16 l-20 -4Z" fill="#c2c5c8"/><path d="M502 556 l20 4 l-11 16 l-20 -4Z" fill="#9fb9ea"/><path d="M365 546 l20 4 l-11 16 l-20 -4Z" fill="#c2c5c8"/><path d="M389 552 l20 4 l-11 16 l-20 -4Z" fill="#c2c5c8"/><path d="M413 558 l20 4 l-11 16 l-20 -4Z" fill="#c2c5c8"/><path d="M437 564 l20 4 l-11 16 l-20 -4Z" fill="#c2c5c8"/><path d="M461 570 l20 4 l-11 16 l-20 -4Z" fill="#9fb9ea"/><path d="M485 576 l20 4 l-11 16 l-20 -4Z" fill="#9fb9ea"/><path d="M348 566 l20 4 l-11 16 l-20 -4Z" fill="#c2c5c8"/><path d="M372 572 l20 4 l-11 16 l-20 -4Z" fill="#c2c5c8"/><path d="M396 578 l20 4 l-11 16 l-20 -4Z" fill="#c2c5c8"/><path d="M420 584 l20 4 l-11 16 l-20 -4Z" fill="#c2c5c8"/>
<path d="M500 570 L552 582 L534 606 L482 594Z" fill="#5d95b4"/>
<!-- paper rolls -->
<path d="M706 598 Q706 580 740 578 Q774 580 774 598 L774 690 Q740 706 706 690Z" fill="url(#r6)"/>
<ellipse cx="740" cy="596" rx="34" ry="16" fill="#f6f6f6" stroke="#c9cdd1" stroke-width="2"/>
<path d="M716 640 Q738 650 748 748 Q760 700 744 640Z" fill="#e9ebed" stroke="#b9bdc1" stroke-width="2"/>
<path d="M630 622 Q630 602 664 600 Q698 602 698 622 L698 722 Q664 742 630 722Z" fill="url(#r6)"/>
<ellipse cx="664" cy="620" rx="34" ry="17" fill="#fbfbfb" stroke="#cdd1d5" stroke-width="2"/>
</svg>
<span style="left:12.0px;top:8.6px;line-height:16px;font-family:'Liberation Sans', sans-serif;font-size:12px;color:#fff;letter-spacing:0.719px;">Arquivo</span>
<span style="left:87.0px;top:8.6px;line-height:16px;font-family:'Liberation Sans', sans-serif;font-size:12px;color:#3b3b3b;letter-spacing:0.614px;">Cadastro</span>
<span style="left:168.0px;top:8.6px;line-height:16px;font-family:'Liberation Sans', sans-serif;font-size:12px;color:#3b3b3b;letter-spacing:0.723px;">Movimentação</span>
<span style="left:282.0px;top:8.6px;line-height:16px;font-family:'Liberation Sans', sans-serif;font-size:12px;color:#3b3b3b;letter-spacing:0.330px;">Financeiro</span>
<span style="left:369.0px;top:8.6px;line-height:16px;font-family:'Liberation Sans', sans-serif;font-size:12px;color:#3b3b3b;letter-spacing:0.552px;">Relatórios</span>
<span style="left:456.0px;top:8.6px;line-height:16px;font-family:'Liberation Sans', sans-serif;font-size:12px;color:#3b3b3b;letter-spacing:0.375px;">Consulta</span>
<span style="left:534.0px;top:8.6px;line-height:16px;font-family:'Liberation Sans', sans-serif;font-size:12px;color:#3b3b3b;letter-spacing:0.566px;">Utilitários</span>
<span style="left:617.0px;top:8.6px;line-height:16px;font-family:'Liberation Sans', sans-serif;font-size:12px;color:#3b3b3b;letter-spacing:0.661px;">Manutenção</span>
<span style="left:717.0px;top:8.6px;line-height:16px;font-family:'Liberation Sans', sans-serif;font-size:12px;color:#3b3b3b;letter-spacing:0.579px;">Desenvolvedor</span>
<span style="left:832.0px;top:8.6px;line-height:16px;font-family:'Liberation Sans', sans-serif;font-size:12px;color:#3b3b3b;letter-spacing:0.431px;">Emissor de Notas Fiscais / Sistema Online</span>
<span style="left:1104.0px;top:8.6px;line-height:16px;font-family:'Liberation Sans', sans-serif;font-size:12px;color:#3b3b3b;letter-spacing:0.219px;">Sair</span>
<span style="left:6.0px;top:81.0px;line-height:16px;font-family:'Liberation Sans', sans-serif;font-size:12px;color:#2f2f2f;letter-spacing:0.551px;">Configurações</span>
<span style="left:18.0px;top:97.0px;line-height:16px;font-family:'Liberation Sans', sans-serif;font-size:12px;color:#2f2f2f;letter-spacing:0.293px;">Gerenciais</span>
<span style="left:103.5px;top:81.0px;line-height:16px;font-family:'Liberation Sans', sans-serif;font-size:12px;color:#2f2f2f;letter-spacing:0.495px;">Empresa</span>
<span style="left:169.5px;top:81.0px;line-height:16px;font-family:'Liberation Sans', sans-serif;font-size:12px;color:#2f2f2f;letter-spacing:0.539px;">Cadastrar</span>
<span style="left:168.5px;top:97.0px;line-height:16px;font-family:'Liberation Sans', sans-serif;font-size:12px;color:#2f2f2f;letter-spacing:0.520px;">usuários</span>
<span style="left:241.5px;top:81.0px;line-height:16px;font-family:'Liberation Sans', sans-serif;font-size:12px;color:#2f2f2f;letter-spacing:0.828px;">Produto</span>
<span style="left:303.0px;top:81.0px;line-height:16px;font-family:'Liberation Sans', sans-serif;font-size:12px;color:#2f2f2f;letter-spacing:0.850px;">Grupo de</span>
<span style="left:307.0px;top:97.0px;line-height:16px;font-family:'Liberation Sans', sans-serif;font-size:12px;color:#2f2f2f;letter-spacing:0.759px;">Material</span>
<span style="left:372.5px;top:81.0px;line-height:16px;font-family:'Liberation Sans', sans-serif;font-size:12px;color:#2f2f2f;letter-spacing:0.662px;">Sub-Grupo</span>
<span style="left:450.5px;top:81.0px;line-height:16px;font-family:'Liberation Sans', sans-serif;font-size:12px;color:#2f2f2f;letter-spacing:0.541px;">Fornecedores</span>
<span style="left:544.5px;top:81.0px;line-height:16px;font-family:'Liberation Sans', sans-serif;font-size:12px;color:#2f2f2f;letter-spacing:0.234px;">Clientes</span>
<span style="left:603.5px;top:81.0px;line-height:16px;font-family:'Liberation Sans', sans-serif;font-size:12px;color:#2f2f2f;letter-spacing:0.375px;">Despesas</span>
<span style="left:674.5px;top:81.0px;line-height:16px;font-family:'Liberation Sans', sans-serif;font-size:12px;color:#2f2f2f;letter-spacing:0.728px;">Manual</span>
<span style="left:673.5px;top:97.0px;line-height:16px;font-family:'Liberation Sans', sans-serif;font-size:12px;color:#2f2f2f;letter-spacing:0.273px;">Sistema</span>
<span style="left:21.0px;top:119.0px;line-height:16px;font-family:'Liberation Sans', sans-serif;font-size:12px;color:#73808f;letter-spacing:0.330px;">Gerencial</span>
<span style="left:103.5px;top:119.0px;line-height:16px;font-family:'Liberation Sans', sans-serif;font-size:12px;color:#73808f;letter-spacing:0.495px;">Empresa</span>
<span style="left:172.5px;top:119.0px;line-height:16px;font-family:'Liberation Sans', sans-serif;font-size:12px;color:#73808f;letter-spacing:0.520px;">Usuários</span>
<span style="left:287.0px;top:119.0px;line-height:16px;font-family:'Liberation Sans', sans-serif;font-size:12px;color:#73808f;letter-spacing:0.538px;">Produtos/Serviços</span>
<span style="left:451.0px;top:119.0px;line-height:16px;font-family:'Liberation Sans', sans-serif;font-size:12px;color:#73808f;letter-spacing:0.421px;">Fornecedores e Clientes</span>
<span style="left:603.5px;top:119.0px;line-height:16px;font-family:'Liberation Sans', sans-serif;font-size:12px;color:#73808f;letter-spacing:0.375px;">Despesas</span>
<span style="left:674.5px;top:119.0px;line-height:16px;font-family:'Liberation Sans', sans-serif;font-size:12px;color:#73808f;letter-spacing:0.728px;">Manual</span>
<span style="left:199.0px;top:371.2px;line-height:36px;font-family:'Liberation Sans', sans-serif;font-size:28px;color:#000;font-weight:bold;letter-spacing:0.712px;-webkit-text-stroke:0.5px #000;">Venda (F3)</span>
<span style="left:205.0px;top:411.0px;line-height:17px;font-family:'Liberation Sans', sans-serif;font-size:13px;color:#f00000;font-weight:bold;letter-spacing:-0.152px;">(F4) Abrir PDV Rápido</span>
<span style="left:414.5px;top:190.5px;line-height:20px;font-family:'Liberation Serif', serif;font-size:15px;color:#000;font-weight:bold;letter-spacing:0.552px;">Novo</span>
<span style="left:531.0px;top:190.5px;line-height:20px;font-family:'Liberation Serif', serif;font-size:15px;color:#9b9b9b;font-weight:bold;letter-spacing:0.103px;">Gravar</span>
<span style="left:652.0px;top:190.5px;line-height:20px;font-family:'Liberation Serif', serif;font-size:15px;color:#000;font-weight:bold;letter-spacing:0.422px;">Alterar</span>
<span style="left:780.0px;top:190.5px;line-height:20px;font-family:'Liberation Serif', serif;font-size:15px;color:#000;font-weight:bold;letter-spacing:0.417px;">Excluir</span>
<span style="left:897.0px;top:190.5px;line-height:20px;font-family:'Liberation Serif', serif;font-size:15px;color:#000;font-weight:bold;letter-spacing:0.589px;">Procurar</span>
<span style="left:1021.0px;top:190.5px;line-height:20px;font-family:'Liberation Serif', serif;font-size:15px;color:#000;font-weight:bold;letter-spacing:-0.224px;">Importar XML</span>
<span style="left:1154.5px;top:187.0px;line-height:17px;font-family:'Liberation Serif', serif;font-size:13.4px;color:#000;font-weight:bold;letter-spacing:0.010px;">Impr Nota Compra</span>
<span style="left:1321.0px;top:187.7px;line-height:18px;font-family:'Liberation Sans', sans-serif;font-size:14px;color:#000;font-weight:bold;letter-spacing:-0.338px;">Maximizar</span>
<span style="left:1444.5px;top:173.0px;line-height:26px;font-family:'Liberation Sans', sans-serif;font-size:20px;color:#ff0000;font-weight:bold;letter-spacing:-0.519px;">Fechar</span>
<span style="left:385.0px;top:229.5px;line-height:23px;font-family:'Liberation Sans', sans-serif;font-size:18px;color:#a6a6a6;letter-spacing:0.795px;">Data Compra</span>
<span style="left:518.0px;top:229.5px;line-height:23px;font-family:'Liberation Sans', sans-serif;font-size:18px;color:#a6a6a6;letter-spacing:1.104px;">Fornecedor</span>
<span style="left:631.0px;top:234.0px;line-height:16px;font-family:'Liberation Sans', sans-serif;font-size:12px;color:#b8b8b8;letter-spacing:0.859px;">Dica: caso fornecedor não esteja cadastrado, digite o nome dele para abrir a tela de cadastro de fornecedores)</span>
<span style="left:1357.0px;top:228.0px;line-height:21px;font-family:'Liberation Sans', sans-serif;font-size:16px;color:#a6a6a6;letter-spacing:0.734px;">Nº NF/Pedido Compra</span>
<span style="left:395.5px;top:255.0px;line-height:23px;font-family:'Liberation Sans', sans-serif;font-size:18px;color:#7f7f7f;letter-spacing:0.323px;">14/01/2025</span>
<span style="left:520.0px;top:255.0px;line-height:23px;font-family:'Liberation Sans', sans-serif;font-size:18px;color:#7f7f7f;letter-spacing:-0.256px;">Fornecedor Padrão</span>
<span style="left:417.0px;top:291.7px;line-height:25px;font-family:'Liberation Serif', serif;font-size:19px;color:#333;letter-spacing:0.756px;">Código (F3)</span>
<span style="left:575.0px;top:291.7px;line-height:25px;font-family:'Liberation Serif', serif;font-size:19px;color:#333;letter-spacing:1.128px;">Descrição do produto</span>
<span style="left:802.0px;top:291.7px;line-height:25px;font-family:'Liberation Serif', serif;font-size:19px;color:#333;letter-spacing:0.505px;">Und.</span>
<span style="left:872.5px;top:291.7px;line-height:25px;font-family:'Liberation Serif', serif;font-size:19px;color:#333;letter-spacing:0.946px;">Pc. compra</span>
<span style="left:1014.5px;top:291.7px;line-height:25px;font-family:'Liberation Serif', serif;font-size:19px;color:#333;letter-spacing:1.354px;">Qtde</span>
<span style="left:1101.0px;top:291.7px;line-height:25px;font-family:'Liberation Serif', serif;font-size:19px;color:#333;letter-spacing:1.336px;">Total bruto</span>
<span style="left:1219.0px;top:291.7px;line-height:25px;font-family:'Liberation Serif', serif;font-size:19px;color:#333;letter-spacing:0.991px;">Desconto. %</span>
<span style="left:1343.0px;top:291.7px;line-height:25px;font-family:'Liberation Serif', serif;font-size:19px;color:#333;letter-spacing:0.831px;">Desconto R$</span>
<span style="left:1037.0px;top:317.7px;line-height:25px;font-family:'Liberation Serif', serif;font-size:19px;color:#222;letter-spacing:1.062px;">1,000</span>
<span style="left:491.0px;top:573.5px;line-height:23px;font-family:'Liberation Sans', sans-serif;font-size:18px;color:#000;letter-spacing:0.228px;">VALOR TOTAL</span>
<span style="left:866.0px;top:573.5px;line-height:23px;font-family:'Liberation Sans', sans-serif;font-size:18px;color:#000;letter-spacing:-0.241px;">TOTAL DESCONTOS</span>
<span style="left:1287.0px;top:573.5px;line-height:23px;font-family:'Liberation Sans', sans-serif;font-size:18px;color:#000;letter-spacing:-0.070px;">TOTAL GERAL</span>
<span style="left:378.0px;top:651.2px;line-height:25px;font-family:'Liberation Sans', sans-serif;font-size:19px;color:#a6a6a6;letter-spacing:0.372px;">Forma de pagamento</span>
<span style="left:867.0px;top:652.2px;line-height:25px;font-family:'Liberation Sans', sans-serif;font-size:19px;color:#a6a6a6;letter-spacing:0.346px;">Data da 1ª Parcela</span>
<span style="left:1112.0px;top:652.2px;line-height:25px;font-family:'Liberation Sans', sans-serif;font-size:19px;color:#a6a6a6;letter-spacing:0.486px;">Qtde de parcelas</span>
<span style="left:890.0px;top:678.5px;line-height:29px;font-family:'Liberation Sans', sans-serif;font-size:22px;color:#7f7f7f;letter-spacing:1.099px;">13/02/2025</span>
<span style="left:1182.9px;top:678.5px;line-height:29px;font-family:'Liberation Sans', sans-serif;font-size:22px;color:#7f7f7f;">1</span>
<span style="left:1391.5px;top:673.7px;line-height:18px;font-family:'Liberation Sans', sans-serif;font-size:14px;color:#000;font-weight:bold;letter-spacing:-0.066px;text-shadow:1px 1px 1px #999;">Gerar Parcelas</span>
<span style="left:396.0px;top:729.0px;line-height:21px;font-family:'Liberation Serif', serif;font-size:16px;color:#000;font-weight:bold;letter-spacing:-0.193px;">PARCELA</span>
<span style="left:501.0px;top:729.0px;line-height:21px;font-family:'Liberation Serif', serif;font-size:16px;color:#000;font-weight:bold;letter-spacing:-0.191px;">VENCIMENTO</span>
<span style="left:650.0px;top:729.0px;line-height:21px;font-family:'Liberation Serif', serif;font-size:16px;color:#000;font-weight:bold;letter-spacing:0.092px;">DOCUMENTO</span>
<span style="left:821.0px;top:729.0px;line-height:21px;font-family:'Liberation Serif', serif;font-size:16px;color:#000;font-weight:bold;letter-spacing:0.570px;">VALOR</span>
<span style="left:1034.0px;top:723.5px;line-height:21px;font-family:'Liberation Sans', sans-serif;font-size:16.5px;color:#000;font-weight:bold;letter-spacing:0.440px;-webkit-text-stroke:0.3px #000;">Observações:</span>
<span style="left:1035.0px;top:834.0px;line-height:22px;font-family:'Liberation Sans', sans-serif;font-size:17px;color:#000;letter-spacing:1.281px;">Configurações:</span>
<span style="left:1067.0px;top:862.0px;line-height:21px;font-family:'Liberation Sans', sans-serif;font-size:16px;color:#ff0000;letter-spacing:0.353px;text-decoration:underline;">Avisar se o item já foi inserido na compra?</span>
<span style="left:1067.0px;top:889.0px;line-height:21px;font-family:'Liberation Sans', sans-serif;font-size:16px;color:#a0a0a0;letter-spacing:0.206px;text-decoration:underline;">Bloquear inserção de produtos duplicados?</span>
<div style="left:2px;top:142px;width:353px;height:548px;overflow:hidden"><span style="left:192.2px;top:500.3px;line-height:30px;font-family:'Liberation Sans', sans-serif;font-size:23px;color:#000;font-weight:bold;letter-spacing:0.132px;-webkit-text-stroke:0.4px #000;">Devolução de</span><span style="left:207.0px;top:532.5px;line-height:30px;font-family:'Liberation Sans', sans-serif;font-size:23px;color:#000;font-weight:bold;letter-spacing:0.332px;-webkit-text-stroke:0.4px #000;">mercadoria</span></div>
<div style="left:363px;top:293px;width:1180px;height:24px;overflow:hidden"><span style="left:1120.5px;top:-1.3px;line-height:25px;font-family:'Liberation Serif', serif;font-size:19px;color:#333;letter-spacing:0.703px;">Total lí</span></div>
</body></html>
